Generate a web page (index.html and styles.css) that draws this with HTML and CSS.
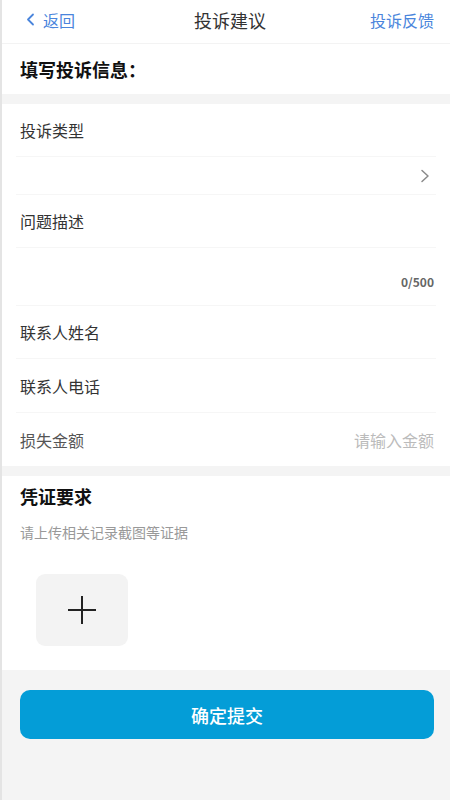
FILE: index.html
```html
<!DOCTYPE html>
<html lang="zh-CN">
<head>
<meta charset="utf-8">
<link rel="stylesheet" href="styles.css">
</head>
<body>
<div class="page">
  <header class="nav">
    <div class="nav-back">
      <svg class="back-icon" width="9" height="13" viewBox="0 0 9 13"><path d="M7 1.5 L2 6.5 L7 11.5" fill="none" stroke="#4a85dc" stroke-width="1.8" stroke-linecap="round" stroke-linejoin="round"/></svg>
      <span>返回</span>
    </div>
    <div class="nav-title">投诉建议</div>
    <div class="nav-right">投诉反馈</div>
  </header>

  <section class="intro">填写投诉信息：</section>

  <div class="gap"></div>

  <section class="form">
    <div class="row label-row">投诉类型</div>
    <div class="row select-row">
      <svg class="chev" width="10" height="14" viewBox="0 0 10 14"><path d="M2 1.5 L8 7 L2 12.5" fill="none" stroke="#8a8a8a" stroke-width="1.5" stroke-linecap="round" stroke-linejoin="round"/></svg>
    </div>
    <div class="row label-row">问题描述</div>
    <div class="row area-row"><span class="count">0/500</span></div>
    <div class="row label-row">联系人姓名</div>
    <div class="row label-row tall">联系人电话</div>
    <div class="row label-row last">
      <span class="label-muted">损失金额</span>
      <span class="placeholder">请输入金额</span>
    </div>
  </section>

  <div class="gap"></div>

  <section class="proof">
    <div class="proof-title">凭证要求</div>
    <div class="proof-hint">请上传相关记录截图等证据</div>
    <div class="upload">
      <svg width="30" height="30" viewBox="0 0 30 30"><path d="M15 1 V29 M1 15 H29" stroke="#222" stroke-width="2"/></svg>
    </div>
  </section>

  <footer class="footer">
    <button class="submit">确定提交</button>
  </footer>
</div>
</body>
</html>
```

FILE: styles.css
```css
* { box-sizing: border-box; }
html, body {
  margin: 0;
  padding: 0;
  height: 100%;
}
body {
  font-family: "Noto Sans CJK SC", "Noto Sans", sans-serif;
  color: #333;
  background: #f4f4f4;
}
.page {
  min-height: 800px;
  border-left: 2px solid #e4e4e4;
  background: #f4f4f4;
  display: flex;
  flex-direction: column;
}
.nav {
  height: 44px;
  background: #fff;
  border-bottom: 1px solid #f3f3f3;
  display: flex;
  align-items: center;
  justify-content: space-between;
  padding: 0 16px 4px 24px;
  font-size: 16px;
}
.nav-back {
  display: flex;
  align-items: center;
  gap: 8px;
  color: #4a85dc;
  width: 80px;
}
.back-icon { display: block; }
.nav-title {
  font-size: 18px;
  color: #333;
}
.nav-right {
  color: #4a85dc;
  width: 80px;
  text-align: right;
}
.intro {
  height: 50px;
  background: #fff;
  display: flex;
  align-items: center;
  padding: 0 16px 0 18px;
  font-size: 18px;
  font-weight: 700;
  color: #111;
}
.gap {
  height: 10px;
  background: #f4f4f4;
}
.form {
  background: #fff;
  padding: 0 14px 0 14px;
}
.row {
  display: flex;
  align-items: center;
  border-bottom: 1px solid #f6f6f6;
  padding: 0 2px 0 4px;
}
.row.last { border-bottom: none; justify-content: space-between; }
.label-row {
  height: 53px;
  font-size: 16px;
  color: #333;
}
.label-row.tall { height: 54px; }
.select-row {
  height: 38px;
  justify-content: flex-end;
  padding-right: 6px;
}
.chev { display: block; }
.area-row {
  height: 58px;
  justify-content: flex-end;
  padding-top: 10px;
}
.count {
  font-size: 12px;
  font-weight: 700;
  color: #666;
}
.label-muted { color: #555; }
.placeholder { color: #bbb; }
.proof {
  background: #fff;
  padding: 6px 16px 24px 18px;
}
.proof-title {
  font-size: 18px;
  font-weight: 700;
  color: #111;
  line-height: 28px;
}
.proof-hint {
  margin-top: 12px;
  font-size: 14px;
  color: #999;
  line-height: 20px;
}
.upload {
  margin: 32px 0 0 16px;
  width: 92px;
  height: 72px;
  border-radius: 9px;
  background: #f3f3f3;
  display: flex;
  align-items: center;
  justify-content: center;
}
.footer {
  flex: 1;
  padding: 20px 16px 20px 18px;
  background: #f4f4f4;
}
.submit {
  display: block;
  width: 100%;
  height: 49px;
  border: none;
  border-radius: 10px;
  background: #049dd7;
  color: #fff;
  font-family: "Noto Sans CJK SC", sans-serif;
  font-size: 18px;
  font-weight: 500;
}
```
